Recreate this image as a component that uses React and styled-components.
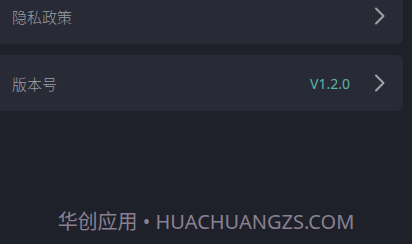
import React from "react";
import styled, { createGlobalStyle } from "styled-components";

const GlobalStyle = createGlobalStyle`
  html, body {
    margin: 0;
    padding: 0;
    background: #1e212a;
    font-family: "Noto Sans", "Noto Sans CJK SC", sans-serif;
  }
`;

const Page = styled.div`
  height: 244px;
  overflow: hidden;
  display: flex;
  flex-direction: column;
`;

const List = styled.div`
  display: flex;
  flex-direction: column;
  gap: 11px;
  margin-top: -12px;
  padding-right: 9px;
`;

const Row = styled.div`
  height: 56px;
  display: flex;
  align-items: center;
  padding: 0 16px 0 12px;
  background: #282b35;
  border-radius: 0 6px 6px 0;
`;

const Label = styled.span`
  flex: 1;
  font-size: 15px;
  color: #9c9ea6;
  font-family: "Noto Sans CJK SC", sans-serif;
  font-weight: 300;
`;

const Value = styled.span`
  font-size: 14px;
  color: #5db3a6;
  margin-right: 23px;
`;

const Chevron = () => (
  <svg width="14" height="20" viewBox="0 0 14 20" fill="none">
    <path d="M3 2.5 L10.5 10 L3 17.5" stroke="#a3a4aa" strokeWidth="2" strokeLinecap="round" strokeLinejoin="round" />
  </svg>
);

const Footer = styled.div`
  margin-top: auto;
  padding-bottom: 9px;
  text-align: center;
  font-size: 20px;
  color: #8b8092;
  font-family: "Noto Sans", "Noto Sans CJK SC", sans-serif;
`;

const items = [
  { label: "隐私政策" },
  { label: "版本号", value: "V1.2.0" },
];

export default function App() {
  return (
    <Page>
      <GlobalStyle />
      <List>
        {items.map((it) => (
          <Row key={it.label}>
            <Label>{it.label}</Label>
            {it.value && <Value>{it.value}</Value>}
            <Chevron />
          </Row>
        ))}
      </List>
      <Footer>华创应用 • HUACHUANGZS.COM</Footer>
    </Page>
  );
}
